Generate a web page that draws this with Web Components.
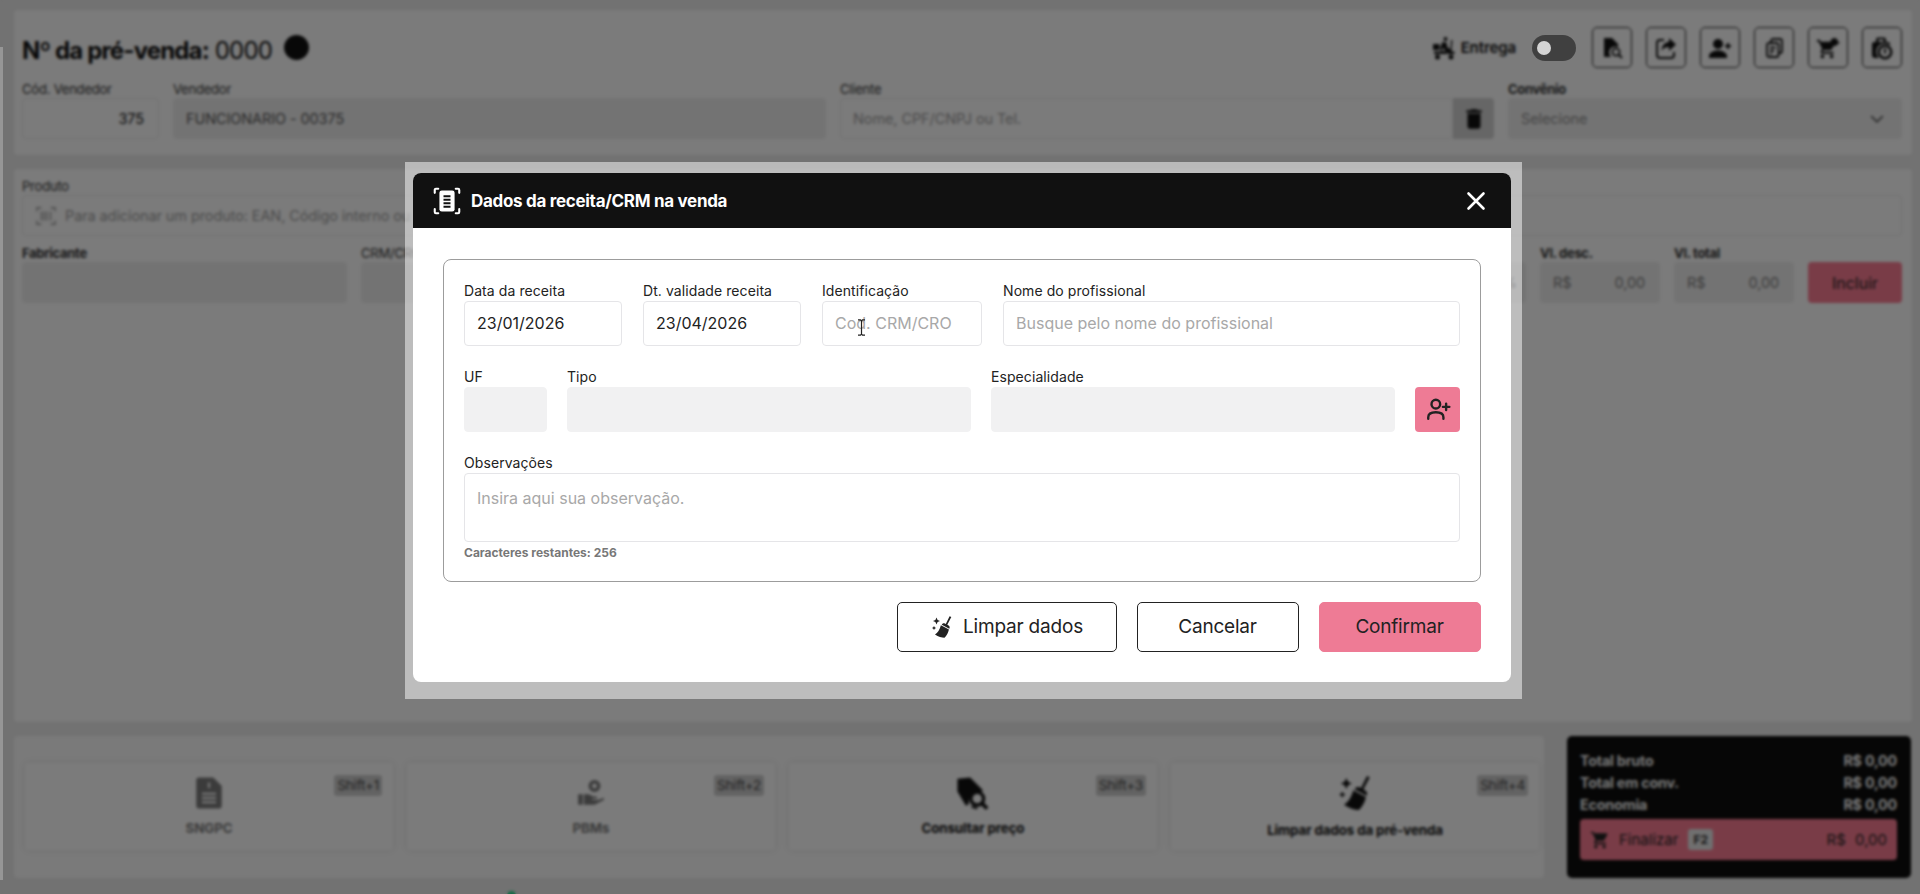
<!DOCTYPE html>
<html lang="pt-BR">
<head>
<meta charset="utf-8">
<title>Pré-venda</title>
<style>
  html, body { margin: 0; height: 100%; overflow: hidden; background: #e4e4e4; font-family: Inter, "Liberation Sans", sans-serif; }
</style>
</head>
<body>
<pre-venda-app></pre-venda-app>
<script>
// icones usados na tela
const CARRINHO = 'M7 18c-1.1 0-1.99.9-1.99 2S5.9 22 7 22s2-.9 2-2-.9-2-2-2zM1 2v2h2l3.6 7.59-1.35 2.45c-.16.28-.25.61-.25.96 0 1.1.9 2 2 2h12v-2H7.42c-.14 0-.25-.11-.25-.25l.03-.12.9-1.63h7.45c.75 0 1.41-.41 1.75-1.03l3.58-6.49c.08-.14.12-.31.12-.48 0-.55-.45-1-1-1H5.21l-.94-2H1zm16 16c-1.1 0-1.99.9-1.99 2s.89 2 1.99 2 2-.9 2-2-.9-2-2-2z';
const ICONES = {
  lixo: '<path fill="currentColor" d="M6 19c0 1.1.9 2 2 2h8c1.1 0 2-.9 2-2V7H6v12zM19 4h-3.5l-1-1h-5l-1 1H5v2h14V4z"/>',
  chevron: '<path fill="none" stroke="currentColor" stroke-width="2" d="M5 8.5l7 7 7-7"/>',
  fechar: '<path fill="none" stroke="currentColor" stroke-width="2.6" stroke-linecap="round" d="M4.5 4.5l15 15M19.5 4.5l-15 15"/>',
  carrinho: `<path fill="currentColor" d="${CARRINHO}"/>`,
  vassoura: '<path fill="currentColor" d="M19.6 1.2l1.7.9-4 7.6 1.3.8c1 .6 1.3 1.8.9 2.8l-.2.4-7.5-4 .2-.4c.5-1 1.8-1.4 2.8-.9l1 .5zM10.9 10.2l8 4.3c-.6 3.2-2.2 6-4.4 8.3-2.7-.2-6.3-1.2-9.5-3.4 2.6-1.3 4.8-5 5.9-9.2zM6.5 2.5l1.1 2.4L10 6l-2.4 1.1-1.1 2.4-1.1-2.4L3 6l2.4-1.1zM4 11l.7 1.3L6 13l-1.3.7L4 15l-.7-1.3L2 13l1.3-.7z"/>',
  receita: '<g fill="none" stroke="currentColor" stroke-width="1.8" stroke-linecap="round"><path d="M1.500 5V2.500a1 1 0 0 1 1-1H4.500M19.500 1.500h2a1 1 0 0 1 1 1V5M22.500 19v2.500a1 1 0 0 1-1 1h-2M4.500 22.500h-2a1 1 0 0 1-1-1V19"/></g><rect x="5.500" y="3" width="13" height="18" rx="2" fill="currentColor"/><path fill="none" stroke="#111" stroke-width="1.700" d="M9 8h6M9 11h6M9 14h6M9 17h6"/>',
  codbarras: '<g fill="none" stroke="currentColor" stroke-width="1.500"><path d="M2 7V3h5M17 3h5v4M22 17v4h-5M7 21H2v-4"/><path d="M7 7v10M10 7v10M13 7v10M17 7v10"/></g>',
  moto: '<path fill="currentColor" d="M13.500 1a2 2 0 1 1 0 4 2 2 0 0 1 0-4zM1 8h6.500v6H1zM10.500 6l4 .5 1 5 3 1.500.5-9 1.500.3-1 11.700h-6l-2-4-1.500 1.500 1.500 2.500H9.500l-1.500-4zM2 15.500h13.500V18H2zM5.500 18.500a2.500 2.500 0 1 1 0 5 2.500 2.500 0 0 1 0-5zM19 18.500a2.500 2.500 0 1 1 0 5 2.500 2.500 0 0 1 0-5zM16 15.500h6.500V18H16z"/>',
  docbusca: '<path fill="currentColor" d="M4 2h8l6 6v3.200a6 6 0 0 0-6.800 9.800H4z"/><circle cx="16" cy="16" r="3.600" fill="none" stroke="currentColor" stroke-width="1.800"/><path stroke="currentColor" stroke-width="2" d="M18.700 18.700l3.300 3.300"/>',
  compartilhar: '<path fill="none" stroke="currentColor" stroke-width="2" d="M10 4H6a3 3 0 0 0-3 3v12a3 3 0 0 0 3 3h11a3 3 0 0 0 3-3v-3"/><path fill="currentColor" d="M15 2l7 6.500-7 6.500v-4c-3.500 0-6 1-7.500 4 .2-5 2.800-8.500 7.500-9z"/>',
  pessoamais: '<path fill="currentColor" d="M10 3a5 5 0 1 1 0 10 5 5 0 0 1 0-10zM1 22v-2c0-3.500 5-5.500 9-5.500s9 2 9 5.500v2zM19 7V9h-2v2h2v2h2v-2h2V9h-2V7z"/>',
  copias: '<g fill="none" stroke="currentColor" stroke-width="1.800"><path d="M9 6V5a2 2 0 0 1 2-2h7a2 2 0 0 1 2 2v10a2 2 0 0 1-2 2h-1"/><rect x="5" y="7" width="11.500" height="14" rx="2"/><path d="M8 11.500h5.500M8 15h4M8 18h1.500"/></g>',
  carrinhofav: `<path fill="currentColor" d="M18 2a4 4 0 0 1 4 3.500l2 1.500-2 .8A4 4 0 1 1 18 2z"/><g transform="translate(0 2) scale(.92)"><path fill="currentColor" d="${CARRINHO}"/></g>`,
  sacola: '<path fill="currentColor" d="M8 1.500h6a2 2 0 0 1 2 2V6h2a2 2 0 0 1 2 2v1.500a7.500 7.500 0 0 0-11 12.500H5a3 3 0 0 1-3-3V8a2 2 0 0 1 2-2h2V3.500a2 2 0 0 1 2-2zM8.500 3.500V6h5V3.500z"/><circle cx="15" cy="16" r="6.200" fill="none" stroke="currentColor" stroke-width="2.600"/><path fill="currentColor" d="M14 12.500h2v5h-2z"/>',
  documento: '<path fill="currentColor" d="M5 1h10l6 6v14a2 2 0 0 1-2 2H5a2 2 0 0 1-2-2V3a2 2 0 0 1 2-2z"/><path fill="none" stroke="#f6f6f6" stroke-width="1.400" d="M7 12.500h10M7 15.500h10M7 18.500h10M12 4.500v4"/>',
  maopin: '<circle cx="15" cy="6" r="3.600" fill="none" stroke="currentColor" stroke-width="3"/><path fill="currentColor" d="M1 13h4v9H1zM6 13h4l4 2h3v2h-4v1h5l5-2v2l-8 4H6z"/>',
  etiqueta: '<path fill="currentColor" d="M1 2l9-1 9 9-2 2a7 7 0 0 0-8 8l-2 1L1 11z"/><circle cx="15" cy="16" r="4.500" fill="none" stroke="currentColor" stroke-width="2.400"/><path stroke="currentColor" stroke-width="2.600" d="M18.500 19.500l3.500 3.500"/><path fill="none" stroke="currentColor" stroke-width="1.500" d="M11 21.500l4 1.500"/>',
  pessoaoutline: '<g fill="none" stroke="currentColor" stroke-width="2.200" stroke-linecap="round"><circle cx="10" cy="7.500" r="4"/><path d="M3 21v-1.500C3 16.500 6 15 10 15s7 1.500 7 4.500V21"/><path d="M19.500 7v6M16.500 10h6"/></g>'
};
const icone = (nome, tam = 24) => `<svg width="${tam}" height="${tam}" viewBox="0 0 24 24" aria-hidden="true">${ICONES[nome]}</svg>`;

// Campo com rotulo. variante: vazio (padrao), cinza
class CampoForm extends HTMLElement {
  connectedCallback() {
    if (this.shadowRoot) return;
    const rotulo = this.getAttribute('rotulo') || '';
    const ajuda = this.getAttribute('placeholder');
    const valor = this.getAttribute('valor');
    this.attachShadow({ mode: 'open' }).innerHTML = `
      <style>
        :host { display: flex; flex-direction: column; min-width: 0; }
        label { font-size: var(--rotulo-fs, 13px); font-weight: 400; height: 17px; line-height: 17px; margin-bottom: var(--rotulo-mb, 0); white-space: nowrap; color: var(--rotulo-cor, #222); letter-spacing: var(--rotulo-ls, -.2px); }
        .caixa { display: flex; align-items: var(--alinha, center); gap: 8px; height: var(--alt, 41px); box-sizing: border-box; padding: var(--pad-top, 0) var(--pad, 14px) 0 var(--pad, 12px); border-radius: 4px; border: 1px solid var(--borda, #e4e4e4); background: var(--fundo, #f6f6f6); font-size: var(--fs, 14.500px); color: var(--cor, #111); white-space: nowrap; overflow: hidden; letter-spacing: var(--ls, -.1px); }
        :host([cinza]) .caixa { background: var(--cinza, #e7e7e7); border-color: var(--cinza, #e7e7e7); color: var(--cor-cinza, #555); }
        :host([direita]) .caixa { justify-content: flex-end; }
        .ajuda { color: var(--ajuda, #999); }
        :host([rotulo-forte]) label { font-weight: 700; letter-spacing: -.3px; }
        ::slotted(*) { flex-shrink: 0; }
      </style>
      <label>${rotulo}</label>
      <div class="caixa"><slot name="inicio"></slot>${valor ? `<span>${valor}</span>` : ''}${ajuda ? `<span class="ajuda">${ajuda}</span>` : ''}<slot></slot></div>`;
  }
}
customElements.define('campo-form', CampoForm);

// Botao quadrado da barra superior
class BotaoIcone extends HTMLElement {
  connectedCallback() {
    if (this.shadowRoot) return;
    this.attachShadow({ mode: 'open' }).innerHTML = `
      <style>
        :host { display: flex; align-items: center; justify-content: center; width: 40px; height: 41px; box-sizing: border-box; border: 1.5px solid #2b2b2b; border-radius: 5px; color: #111; }
      </style>
      ${icone(this.getAttribute('icone'), 24)}`;
  }
}
customElements.define('botao-icone', BotaoIcone);

// Card de atalho no rodape
class CardAtalho extends HTMLElement {
  connectedCallback() {
    if (this.shadowRoot) return;
    const apagado = this.hasAttribute('apagado');
    const tam = Number(this.getAttribute('tam') || 34);
    this.attachShadow({ mode: 'open' }).innerHTML = `
      <style>
        :host { display: flex; flex-direction: column; align-items: center; justify-content: center; gap: 10px; position: relative; background: #f7f7f7; border-radius: 4px; padding-bottom: 1px; box-shadow: 0 0 6px rgba(0,0,0,.1); color: ${apagado ? '#777' : '#111'}; }
        .ic { height: ${Math.max(tam, 34)}px; display: flex; align-items: center; }
        .nome { font-size: 13.300px; font-weight: 700; letter-spacing: -.1px; line-height: 16px; }
        .atalho { position: absolute; top: 12px; right: 11px; padding: 0 3px; height: 21px; line-height: 21px; background: #c6c6c6; border-radius: 3px; font-size: 13.500px; color: #444; letter-spacing: -.2px; }
      </style>
      <div class="ic">${icone(this.getAttribute('icone'), tam)}</div>
      <span class="nome">${this.getAttribute('nome')}</span>
      <span class="atalho">${this.getAttribute('atalho')}</span>`;
  }
}
customElements.define('card-atalho', CardAtalho);

// Quadro preto de totais
class QuadroTotais extends HTMLElement {
  connectedCallback() {
    if (this.shadowRoot) return;
    const linha = (a, b) => `<div class="linha"><span>${a}</span><span>${b}</span></div>`;
    this.attachShadow({ mode: 'open' }).innerHTML = `
      <style>
        :host { display: flex; flex-direction: column; background: #0c0c0c; border-radius: 5px; padding: 14px 14px 18px 13px; box-sizing: border-box; color: #fff; }
        .linha { display: flex; justify-content: space-between; height: 22px; line-height: 22px; font-size: 14.300px; font-weight: 700; letter-spacing: -.2px; color: #f0f0f0; }
        .finalizar { display: flex; align-items: center; height: 41px; margin-top: 3px; padding: 0 10px; background: #f3798f; border-radius: 4px; color: #222; font-size: 15px; }
        .finalizar svg { margin-right: 9px; }
        kbd { font: 700 12px Inter, sans-serif; background: #e0e0e0; color: #333; border-radius: 3px; padding: 3px 5px; margin-left: 10px; }
        .valor { margin-left: auto; word-spacing: 5px; }
      </style>
      ${linha('Total bruto', 'R$ 0,00')}${linha('Total em conv.', 'R$ 0,00')}${linha('Economia', 'R$ 0,00')}
      <div class="finalizar">${icone('carrinho', 20)}<span>Finalizar</span><kbd>F2</kbd><span class="valor">R$ 0,00</span></div>`;
  }
}
customElements.define('quadro-totais', QuadroTotais);

// Modal de dados da receita
class ModalReceita extends HTMLElement {
  connectedCallback() {
    if (this.shadowRoot) return;
    this.attachShadow({ mode: 'open' }).innerHTML = `
      <style>
        :host { position: absolute; left: 405px; top: 162px; width: 1117px; box-sizing: border-box; padding: 11px 11.500px 17px 8px; background: rgba(255,255,255,.5); display: block; }
        .janela { background: #fff; border-radius: 8px; overflow: hidden; color: #111; }
        header { display: flex; align-items: center; height: 55px; background: #111; color: #fff; padding: 0 23px 0 20px; gap: 10px; }
        header h2 { margin: 0; font-size: 17px; font-weight: 700; letter-spacing: -.3px; flex: 1; }
        .corpo { padding: 31px 30px 30px; }
        .quadro { border: 1.5px solid #9c9c9c; border-radius: 8px; padding: 21.500px 20px 21px; display: flex; flex-direction: column; --fundo: #fff; --borda: #e5e5e8; --cinza: #f1f1f2; --alt: 45px; --rotulo-fs: 14px; --rotulo-ls: .08px; --rotulo-mb: 2px; --fs: 16px; --ls: 0; --ajuda: #a8a8a8; --rotulo-cor: #222; --cor: #222; --pad: 12px; }
        .l1 { display: grid; grid-template-columns: 158px 158px 160px 1fr; column-gap: 21px; }
        .l2 { display: grid; grid-template-columns: 83px 404px 404px 45px; column-gap: 20px; margin-top: 22px; align-items: end; }
        .mais { display: flex; align-items: center; justify-content: center; height: 45px; background: #ee7b95; border-radius: 4px; color: #222; }
        .obs { margin-top: 22px; --alt: 69px; --alinha: flex-start; --pad-top: 14px; }
        .rest { font-size: 12px; font-weight: 700; color: #777; margin-top: 4px; line-height: 14px; letter-spacing: 0; }
        .l3 { display: flex; justify-content: flex-end; gap: 20px; margin-top: 20px; }
        button { font: 400 19px Inter, sans-serif; height: 50px; border-radius: 5px; border: 1.5px solid #222; background: #fff; color: #222; display: flex; align-items: center; justify-content: center; gap: 9px; letter-spacing: -.2px; padding: 0; box-sizing: border-box; }
        .limpar { width: 220px; } .cancelar { width: 162px; }
        .confirmar { width: 162px; background: #ee7b95; border-color: #ee7b95; }
        .cursor { position: absolute; left: 452px; top: 157px; }
      </style>
      <div class="janela">
        <header>${icone('receita', 28)}<h2>Dados da receita/CRM na venda</h2>${icone('fechar', 24)}</header>
        <div class="corpo">
          <div class="quadro">
            <div class="l1">
              <campo-form rotulo="Data da receita" valor="23/01/2026"></campo-form>
              <campo-form rotulo="Dt. validade receita" valor="23/04/2026"></campo-form>
              <campo-form rotulo="Identificação" placeholder="Cod. CRM/CRO"></campo-form>
              <campo-form rotulo="Nome do profissional" placeholder="Busque pelo nome do profissional"></campo-form>
            </div>
            <div class="l2">
              <campo-form rotulo="UF" cinza></campo-form>
              <campo-form rotulo="Tipo" cinza></campo-form>
              <campo-form rotulo="Especialidade" cinza></campo-form>
              <div class="mais">${icone('pessoaoutline', 26)}</div>
            </div>
            <campo-form class="obs" rotulo="Observações" placeholder="Insira aqui sua observação."></campo-form>
            <div class="rest">Caracteres restantes: 256</div>
          </div>
          <div class="l3">
            <button class="limpar">${icone('vassoura', 24)}Limpar dados</button>
            <button class="cancelar">Cancelar</button>
            <button class="confirmar">Confirmar</button>
          </div>
        </div>
      </div>
      <svg class="cursor" width="9" height="17" viewBox="0 0 9 17"><path fill="none" stroke="#222" stroke-width="1.200" d="M1 .8h2.500l1 1 1-1H8M4.500 1.800v13.400M1 16.200h2.500l1-1 1 1H8"/></svg>`;
  }
}
customElements.define('modal-receita', ModalReceita);

// Pagina inteira (fundo apagado + modal por cima)
class PreVendaApp extends HTMLElement {
  connectedCallback() {
    this.attachShadow({ mode: 'open' }).innerHTML = `
      <style>
        :host { display: block; position: relative; width: 1920px; height: 894px; overflow: hidden; background: #e4e4e4; font-family: Inter, "Liberation Sans", sans-serif; color: #111; --rotulo-cor: #333; }
        .pagina { display: flex; flex-direction: column; height: 100%; padding: 10px 8px 16px 14px; box-sizing: border-box; gap: 14px; }
        .painel { background: #f6f6f6; border-radius: 4px; padding: 0 10px 0 8px; }
        .dados { height: 145px; box-sizing: border-box; padding-top: 17px; }
        .topo { display: flex; align-items: center; height: 41px; }
        h1 { margin: 0; padding-top: 5px; font-size: 24px; font-weight: 700; letter-spacing: -.85px; display: flex; align-items: center; }
        h1 span { font-weight: 400; margin-left: 6px; }
        h1 i { width: 25px; height: 25px; background: #111; border-radius: 50%; margin-left: 12px; margin-top: -5px; }
        .acoes { margin-left: auto; display: flex; align-items: center; }
        .entrega { display: flex; align-items: center; gap: 5px; font-size: 15px; font-weight: 600; letter-spacing: -.1px; margin-right: 16px; }
        /* a chave fica acima do veu, no original ela aparece mais clara que o resto */
        .chave { width: 44px; height: 26px; border-radius: 13px; background: #404040; position: relative; z-index: 1; margin-right: 16px; }
        .chave::after { content: ''; position: absolute; left: 5px; top: 6px; width: 14px; height: 14px; background: #d4d4d4; border-radius: 50%; }
        .botoes { display: flex; gap: 14px; }
        .l-vendedor { display: grid; grid-template-columns: 137px 653px 654px 394px; column-gap: 14px; margin-top: 13px; }
        .l-cliente { display: flex; }
        .l-cliente campo-form { flex: 1; }
        .excluir { width: 41px; height: 41px; margin-top: 17px; background: #ccc; color: #111; border-radius: 0 4px 4px 0; display: flex; align-items: center; justify-content: center; }
        .produto { flex: 1; box-sizing: border-box; padding-top: 9px; }
        .l-itens { display: grid; grid-template-columns: 325px 1fr 120px 120px 94px; column-gap: 14px; margin-top: 9px; align-items: end; }
        .incluir { height: 41px; background: #f3798f; border-radius: 4px; display: flex; align-items: center; justify-content: center; font-size: 16px; color: #222; }
        .rodape { display: grid; grid-template-columns: 1fr 344px; gap: 23px; height: 142px; margin-right: 1px; }
        .atalhos { display: grid; grid-template-columns: repeat(4, 1fr); gap: 14px; padding: 27px 5px 28px 11px; background: #f4f4f4; }
        .rs { color: #777; flex: 1; }
        .veu { position: absolute; inset: 0; background: rgba(0,0,0,.5); backdrop-filter: blur(1.400px); }
        .ponto { position: absolute; left: 507px; top: 891px; width: 9px; height: 9px; border-radius: 50%; background: #2bd38c; }
        .trilho { position: absolute; left: 0; top: 47px; width: 3px; height: 833px; background: #969696; }
      </style>
      <div class="pagina">
        <section class="painel dados">
          <div class="topo">
            <h1>Nº da pré-venda:<span>0000</span><i></i></h1>
            <div class="acoes">
              <div class="entrega">${icone('moto', 24)}Entrega</div>
              <div class="chave"></div>
              <div class="botoes">
                <botao-icone icone="docbusca"></botao-icone>
                <botao-icone icone="compartilhar"></botao-icone>
                <botao-icone icone="pessoamais"></botao-icone>
                <botao-icone icone="copias"></botao-icone>
                <botao-icone icone="carrinhofav"></botao-icone>
                <botao-icone icone="sacola"></botao-icone>
              </div>
            </div>
          </div>
          <div class="l-vendedor">
            <campo-form rotulo="Cód. Vendedor" valor="375" direita></campo-form>
            <campo-form rotulo="Vendedor" valor="FUNCIONARIO - 00375" cinza></campo-form>
            <div class="l-cliente">
              <campo-form rotulo="Cliente" placeholder="Nome, CPF/CNPJ ou Tel."></campo-form>
              <div class="excluir">${icone('lixo', 26)}</div>
            </div>
            <campo-form rotulo="Convênio" placeholder="Selecione" rotulo-forte cinza style="--ajuda:#888">
              <span style="margin-left:auto;display:flex;color:#555">${icone('chevron', 20)}</span>
            </campo-form>
          </div>
        </section>
        <section class="painel produto">
          <campo-form rotulo="Produto" placeholder="Para adicionar um produto: EAN, Código interno ou Descrição">
            <span slot="inicio" style="display:flex;color:#999">${icone('codbarras', 22)}</span>
          </campo-form>
          <div class="l-itens">
            <campo-form rotulo="Fabricante" rotulo-forte cinza></campo-form>
            <campo-form rotulo="CRM/CRO" cinza style="--pad:8px"><span style="margin-left:auto;color:#555">%</span></campo-form>
            <campo-form rotulo="Vl. desc." rotulo-forte cinza><span class="rs">R$</span><span style="color:#777">0,00</span></campo-form>
            <campo-form rotulo="Vl. total" rotulo-forte cinza><span class="rs">R$</span><span style="color:#777">0,00</span></campo-form>
            <div class="incluir">Incluir</div>
          </div>
        </section>
        <section class="rodape">
          <div class="painel atalhos">
            <card-atalho icone="documento" nome="SNGPC" atalho="Shift+1" apagado></card-atalho>
            <card-atalho icone="maopin" tam="28" nome="PBMs" atalho="Shift+2" apagado></card-atalho>
            <card-atalho icone="etiqueta" nome="Consultar preço" atalho="Shift+3"></card-atalho>
            <card-atalho icone="vassoura" tam="38" nome="Limpar dados da pré-venda" atalho="Shift+4"></card-atalho>
          </div>
          <quadro-totais></quadro-totais>
        </section>
      </div>
      <div class="ponto"></div>
      <div class="veu"></div>
      <div class="trilho"></div>
      <modal-receita></modal-receita>`;
  }
}
customElements.define('pre-venda-app', PreVendaApp);
</script>
</body>
</html>
